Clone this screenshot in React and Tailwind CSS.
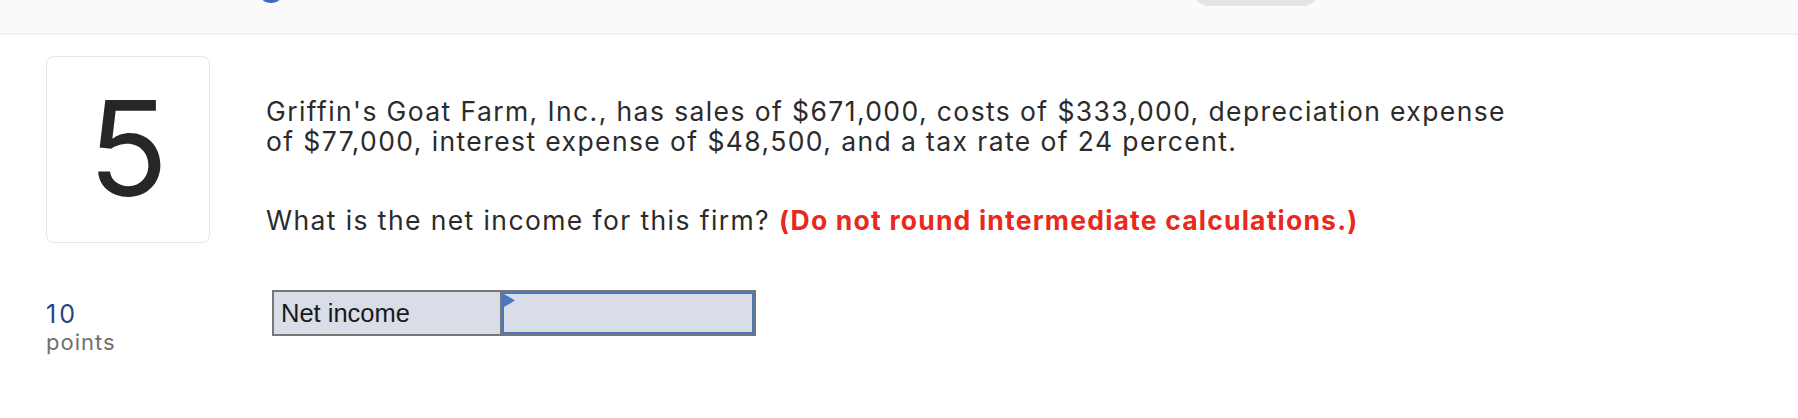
import React from 'react';

const font = { fontFamily: 'Inter, "Noto Sans", sans-serif' };

const App = () => {
  return (
    <div className="min-h-screen w-full bg-white overflow-hidden" style={font}>
      {/* Top bar (mostly scrolled off) */}
      <div className="h-[35px] bg-[#fafafa] border-b-2 border-[#f0f0f0] flex items-start overflow-hidden">
        <div className="ml-[259px] -mt-[19px] w-[24px] h-[22px] rounded-full bg-[#3b6cc4]" />
        <div className="ml-[909px] -mt-[34px] w-[128px] h-[40px] rounded-[18px] bg-[#e5e3e6]" />
      </div>

      <div className="flex pl-[46px] pt-[21px]">
        {/* Question number + points */}
        <div className="w-[164px] shrink-0">
          <div className="h-[187px] border-[1.5px] border-[#e6e6e6] rounded-[8px] flex items-center justify-center">
            <span className="text-[132px] leading-none text-[#262626] pb-[4px]">5</span>
          </div>
          <div className="mt-[56px] text-[25px] leading-[30px] tracking-[3px] text-[#1d4688]">10</div>
          <div className="text-[22px] leading-[26px] tracking-[1px] text-[#6f6f6f]">points</div>
        </div>

        {/* Question body */}
        <div className="ml-[56px] pt-[40px] text-[#2b2b2b]">
          <p className="text-[26.5px] leading-[30px] tracking-[1.4px] max-w-[1250px]">
            Griffin's Goat Farm, Inc., has sales of $671,000, costs of $333,000, depreciation expense of $77,000, interest expense of $48,500, and a tax rate of 24 percent.
          </p>
          <p className="mt-[49px] text-[26.5px] leading-[30px] tracking-[1.4px]">
            What is the net income for this firm?{' '}
            <span className="font-bold text-[#e8291c] tracking-[1.2px]">(Do not round intermediate calculations.)</span>
          </p>

          <div className="mt-[55px] ml-[6px] flex w-[484px] h-[46px] border-2 border-[#777777] bg-[#d9dde8]">
            <div
              className="w-[228px] border-r-2 border-[#777777] pl-[7px] flex items-center text-[25.5px] text-[#1a1a1a]"
              style={{ fontFamily: '"Liberation Sans", Arial, sans-serif' }}
            >
              Net income
            </div>
            <div className="relative flex-1 border-2 border-[#4a78c0] bg-[#d9dde8]">
              <svg className="absolute left-0 top-0" width="11" height="13" viewBox="0 0 11 13">
                <polygon points="0,0 11,6.5 0,13" fill="#4a78c0" />
              </svg>
            </div>
          </div>
        </div>
      </div>
    </div>
  );
};

export default App;
